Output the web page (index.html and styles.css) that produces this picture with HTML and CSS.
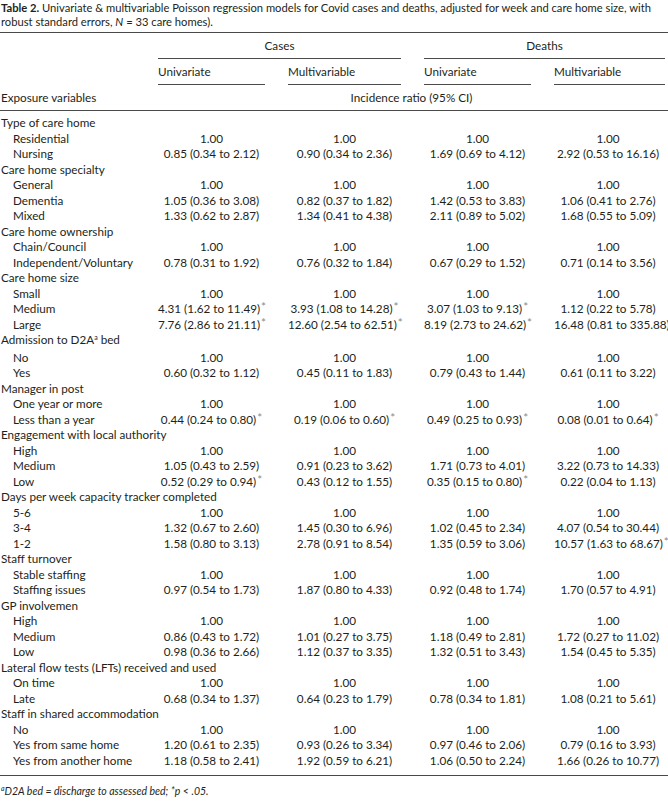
FILE: index.html
```html
<!DOCTYPE html>
<html lang="en">
<head>
<meta charset="utf-8">
<title>Table 2</title>
<link rel="stylesheet" href="styles.css">
</head>
<body>
<p class="caption"><b>Table 2.</b><span> Univariate &amp; multivariable Poisson regression models for Covid cases and deaths, adjusted for week and care home size, with</span><br><span>robust standard errors, </span><i>N</i><span> = 33 care homes).</span></p>
<table class="tbl">
<colgroup>
<col class="c-label"><col class="c-1"><col class="c-2"><col class="c-3"><col class="c-4">
</colgroup>
<thead>
<tr class="h1">
<th class="lab top"></th>
<th class="grp top pr" colspan="2"><div class="rule center">Cases</div></th>
<th class="grp top pr-last" colspan="2"><div class="rule center">Deaths</div></th>
</tr>
<tr class="h2">
<th class="lab"></th>
<th class="pr"><div class="rule">Univariate</div></th>
<th class="pr"><div class="rule">Multivariable</div></th>
<th class="pr"><div class="rule">Univariate</div></th>
<th class="pr-last"><div class="rule">Multivariable</div></th>
</tr>
<tr class="h3">
<th class="lab bottom"><div class="hcell">Exposure variables</div></th>
<th class="bottom pr-last" colspan="4"><div class="hcell center">Incidence ratio (95% CI)</div></th>
</tr>
</thead>
<tbody>
<tr class="first"><td class="grp-label" colspan="5">Type of care home</td></tr>
<tr><td class="sub">Residential</td><td class="v">1.00</td><td class="v">1.00</td><td class="v">1.00</td><td class="v last">1.00</td></tr>
<tr><td class="sub">Nursing</td><td class="v">0.85 (0.34 to 2.12)</td><td class="v">0.90 (0.34 to 2.36)</td><td class="v">1.69 (0.69 to 4.12)</td><td class="v last">2.92 (0.53 to 16.16)</td></tr>
<tr><td class="grp-label" colspan="5">Care home specialty</td></tr>
<tr><td class="sub">General</td><td class="v">1.00</td><td class="v">1.00</td><td class="v">1.00</td><td class="v last">1.00</td></tr>
<tr><td class="sub">Dementia</td><td class="v">1.05 (0.36 to 3.08)</td><td class="v">0.82 (0.37 to 1.82)</td><td class="v">1.42 (0.53 to 3.83)</td><td class="v last">1.06 (0.41 to 2.76)</td></tr>
<tr><td class="sub">Mixed</td><td class="v">1.33 (0.62 to 2.87)</td><td class="v">1.34 (0.41 to 4.38)</td><td class="v">2.11 (0.89 to 5.02)</td><td class="v last">1.68 (0.55 to 5.09)</td></tr>
<tr><td class="grp-label" colspan="5">Care home ownership</td></tr>
<tr><td class="sub">Chain/Council</td><td class="v">1.00</td><td class="v">1.00</td><td class="v">1.00</td><td class="v last">1.00</td></tr>
<tr><td class="sub">Independent/Voluntary</td><td class="v">0.78 (0.31 to 1.92)</td><td class="v">0.76 (0.32 to 1.84)</td><td class="v">0.67 (0.29 to 1.52)</td><td class="v last">0.71 (0.14 to 3.56)</td></tr>
<tr><td class="grp-label" colspan="5">Care home size</td></tr>
<tr><td class="sub">Small</td><td class="v">1.00</td><td class="v">1.00</td><td class="v">1.00</td><td class="v last">1.00</td></tr>
<tr><td class="sub">Medium</td><td class="v">4.31 (1.62 to 11.49)<span class="sig">*</span></td><td class="v">3.93 (1.08 to 14.28)<span class="sig">*</span></td><td class="v">3.07 (1.03 to 9.13)<span class="sig">*</span></td><td class="v last">1.12 (0.22 to 5.78)</td></tr>
<tr><td class="sub">Large</td><td class="v">7.76 (2.86 to 21.11)<span class="sig">*</span></td><td class="v">12.60 (2.54 to 62.51)<span class="sig">*</span></td><td class="v">8.19 (2.73 to 24.62)<span class="sig">*</span></td><td class="v last">16.48 (0.81 to 335.88)</td></tr>
<tr><td class="grp-label" colspan="5">Admission to D2A<span class="fn">a</span> bed</td></tr>
<tr><td class="sub">No</td><td class="v">1.00</td><td class="v">1.00</td><td class="v">1.00</td><td class="v last">1.00</td></tr>
<tr><td class="sub">Yes</td><td class="v">0.60 (0.32 to 1.12)</td><td class="v">0.45 (0.11 to 1.83)</td><td class="v">0.79 (0.43 to 1.44)</td><td class="v last">0.61 (0.11 to 3.22)</td></tr>
<tr><td class="grp-label" colspan="5">Manager in post</td></tr>
<tr><td class="sub">One year or more</td><td class="v">1.00</td><td class="v">1.00</td><td class="v">1.00</td><td class="v last">1.00</td></tr>
<tr><td class="sub">Less than a year</td><td class="v">0.44 (0.24 to 0.80)<span class="sig">*</span></td><td class="v">0.19 (0.06 to 0.60)<span class="sig">*</span></td><td class="v">0.49 (0.25 to 0.93)<span class="sig">*</span></td><td class="v last">0.08 (0.01 to 0.64)<span class="sig">*</span></td></tr>
<tr><td class="grp-label" colspan="5">Engagement with local authority</td></tr>
<tr><td class="sub">High</td><td class="v">1.00</td><td class="v">1.00</td><td class="v">1.00</td><td class="v last">1.00</td></tr>
<tr><td class="sub">Medium</td><td class="v">1.05 (0.43 to 2.59)</td><td class="v">0.91 (0.23 to 3.62)</td><td class="v">1.71 (0.73 to 4.01)</td><td class="v last">3.22 (0.73 to 14.33)</td></tr>
<tr><td class="sub">Low</td><td class="v">0.52 (0.29 to 0.94)<span class="sig">*</span></td><td class="v">0.43 (0.12 to 1.55)</td><td class="v">0.35 (0.15 to 0.80)<span class="sig">*</span></td><td class="v last">0.22 (0.04 to 1.13)</td></tr>
<tr><td class="grp-label" colspan="5">Days per week capacity tracker completed</td></tr>
<tr><td class="sub">5-6</td><td class="v">1.00</td><td class="v">1.00</td><td class="v">1.00</td><td class="v last">1.00</td></tr>
<tr><td class="sub">3-4</td><td class="v">1.32 (0.67 to 2.60)</td><td class="v">1.45 (0.30 to 6.96)</td><td class="v">1.02 (0.45 to 2.34)</td><td class="v last">4.07 (0.54 to 30.44)</td></tr>
<tr><td class="sub">1-2</td><td class="v">1.58 (0.80 to 3.13)</td><td class="v">2.78 (0.91 to 8.54)</td><td class="v">1.35 (0.59 to 3.06)</td><td class="v last">10.57 (1.63 to 68.67)<span class="sig">*</span></td></tr>
<tr><td class="grp-label" colspan="5">Staff turnover</td></tr>
<tr><td class="sub">Stable staffing</td><td class="v">1.00</td><td class="v">1.00</td><td class="v">1.00</td><td class="v last">1.00</td></tr>
<tr><td class="sub">Staffing issues</td><td class="v">0.97 (0.54 to 1.73)</td><td class="v">1.87 (0.80 to 4.33)</td><td class="v">0.92 (0.48 to 1.74)</td><td class="v last">1.70 (0.57 to 4.91)</td></tr>
<tr><td class="grp-label" colspan="5">GP involvemen</td></tr>
<tr><td class="sub">High</td><td class="v">1.00</td><td class="v">1.00</td><td class="v">1.00</td><td class="v last">1.00</td></tr>
<tr><td class="sub">Medium</td><td class="v">0.86 (0.43 to 1.72)</td><td class="v">1.01 (0.27 to 3.75)</td><td class="v">1.18 (0.49 to 2.81)</td><td class="v last">1.72 (0.27 to 11.02)</td></tr>
<tr><td class="sub">Low</td><td class="v">0.98 (0.36 to 2.66)</td><td class="v">1.12 (0.37 to 3.35)</td><td class="v">1.32 (0.51 to 3.43)</td><td class="v last">1.54 (0.45 to 5.35)</td></tr>
<tr><td class="grp-label" colspan="5">Lateral flow tests (LFTs) received and used</td></tr>
<tr><td class="sub">On time</td><td class="v">1.00</td><td class="v">1.00</td><td class="v">1.00</td><td class="v last">1.00</td></tr>
<tr><td class="sub">Late</td><td class="v">0.68 (0.34 to 1.37)</td><td class="v">0.64 (0.23 to 1.79)</td><td class="v">0.78 (0.34 to 1.81)</td><td class="v last">1.08 (0.21 to 5.61)</td></tr>
<tr><td class="grp-label" colspan="5">Staff in shared accommodation</td></tr>
<tr><td class="sub">No</td><td class="v">1.00</td><td class="v">1.00</td><td class="v">1.00</td><td class="v last">1.00</td></tr>
<tr><td class="sub">Yes from same home</td><td class="v">1.20 (0.61 to 2.35)</td><td class="v">0.93 (0.26 to 3.34)</td><td class="v">0.97 (0.46 to 2.06)</td><td class="v last">0.79 (0.16 to 3.93)</td></tr>
<tr class="final"><td class="sub">Yes from another home</td><td class="v">1.18 (0.58 to 2.41)</td><td class="v">1.92 (0.59 to 6.21)</td><td class="v">1.06 (0.50 to 2.24)</td><td class="v last">1.66 (0.26 to 10.77)</td></tr>
</tbody>
</table>
<p class="footnote"><span class="fn">a</span>D2A bed = discharge to assessed bed; *p &lt; .05.</p>
</body>
</html>
```

FILE: styles.css
```css
html, body {
  margin: 0;
  padding: 0;
  background: #ffffff;
}

body {
  font-family: Lato, "Open Sans", "DejaVu Sans", sans-serif;
  font-size: 11.7px;
  color: #231f20;
  padding-top: 1px;
}

.caption {
  margin: 0 0 3px 1px;
  font-size: 11.2px;
  line-height: 14px;
  white-space: nowrap;
}

.caption b {
  font-weight: 700;
}

.tbl {
  width: 668px;
  border-collapse: separate;
  border-spacing: 0;
  table-layout: fixed;
}

.c-label { width: 158px; }
.c-1 { width: 130px; }
.c-2 { width: 136px; }
.c-3 { width: 130px; }
.c-4 { width: 114px; }

.tbl th {
  font-weight: 400;
  text-align: left;
  padding: 0;
  vertical-align: bottom;
}

.tbl th.top {
  border-top: 1px solid #4a4a4a;
}

.tbl th.bottom {
  border-bottom: 1px solid #4a4a4a;
}

.tbl th.pr { padding-right: 23px; }
.tbl th.pr-last { padding-right: 3px; }

.rule {
  height: 25px;
  line-height: 25px;
  border-bottom: 1px solid #4a4a4a;
}

.hcell {
  height: 25px;
  line-height: 25px;
}

.lab .hcell {
  padding-left: 1px;
}

.center {
  text-align: center;
}

.tbl td {
  padding: 0;
  line-height: 15.5px;
  height: 15.5px;
  white-space: nowrap;
}

.tbl tr.first td {
  padding-top: 4px;
}

.tbl tr.final td {
  padding-bottom: 7px;
  border-bottom: 1px solid #4a4a4a;
}

.grp-label {
  padding-left: 1px !important;
}

.sub {
  padding-left: 13px !important;
}

.v {
  text-align: center;
  padding-right: 23px !important;
}

.v.last {
  padding-right: 6px !important;
}

.sig {
  color: #8a8a8a;
  position: relative;
  top: -2px;
  margin-left: 1px;
}

.fn {
  font-size: 7px;
  position: relative;
  top: -4px;
}

.footnote {
  margin: 8px 0 0 1px;
  line-height: 14px;
  font-size: 10.5px;
  font-style: italic;
}
```
